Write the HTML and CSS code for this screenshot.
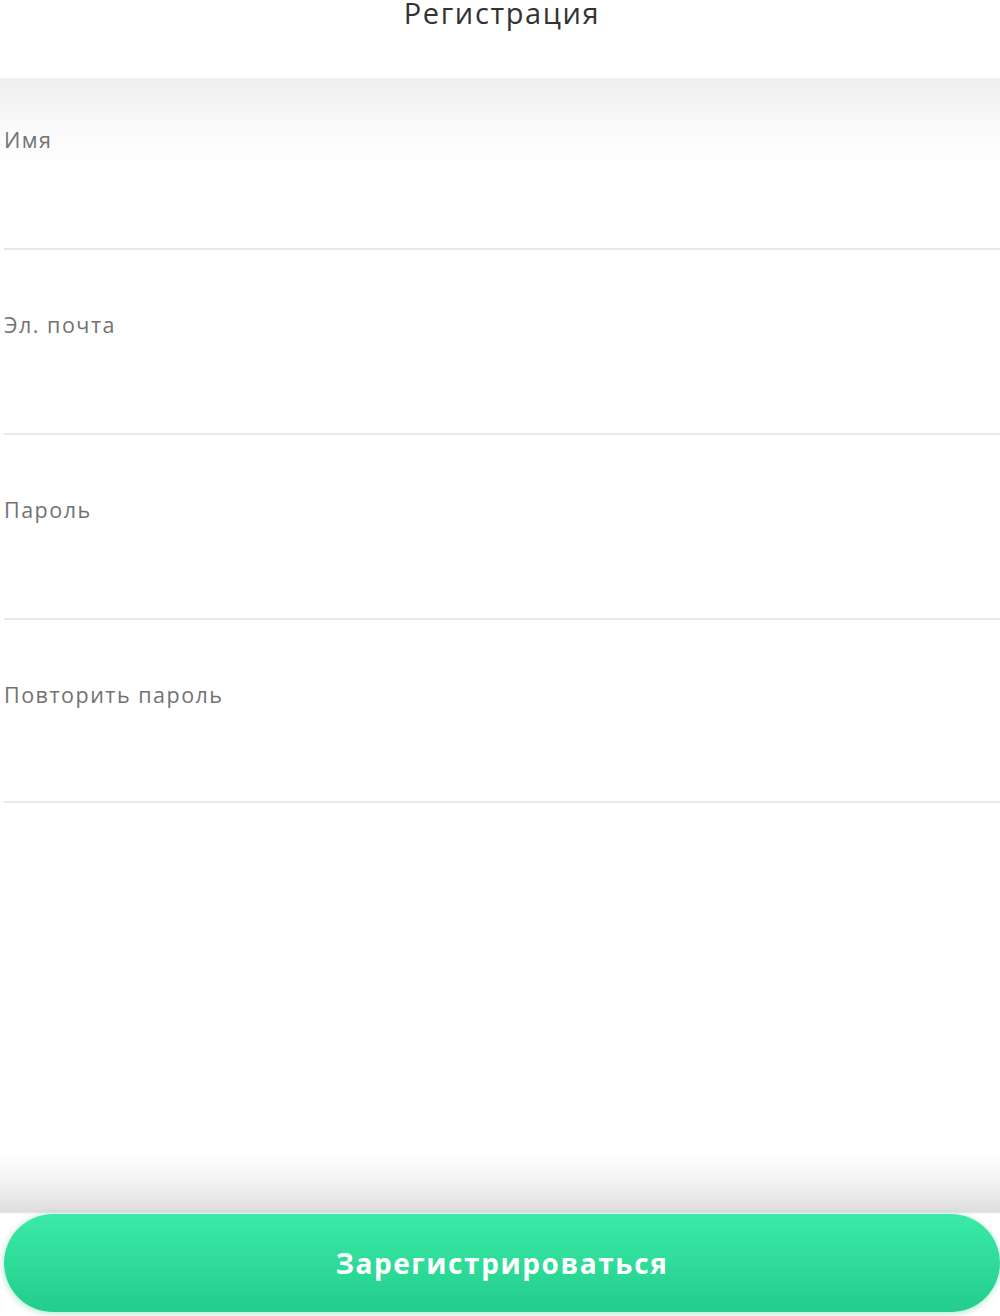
FILE: index.html
```html
<!DOCTYPE html>
<html lang="ru">
<head>
<meta charset="utf-8">
<title>Регистрация</title>
<link rel="stylesheet" href="styles.css">
</head>
<body>
<div class="page">
  <header class="header"><h1 class="title">Регистрация</h1></header>
  <main class="content">
    <form class="form">
      <label class="field"><span class="label">Имя</span><input class="input" type="text"></label>
      <label class="field"><span class="label">Эл. почта</span><input class="input" type="email"></label>
      <label class="field"><span class="label">Пароль</span><input class="input" type="password"></label>
      <label class="field"><span class="label">Повторить пароль</span><input class="input" type="password"></label>
    </form>
  </main>
  <footer class="footer">
    <button class="submit" type="button">Зарегистрироваться</button>
  </footer>
</div>
</body>
</html>
```

FILE: styles.css
```css
html, body {
  margin: 0;
  padding: 0;
  background: #fff;
}
body {
  font-family: "Open Sans", "Liberation Sans", sans-serif;
  padding-left: 4px;
  height: 1316px;
  overflow: hidden;
}
.page {
  display: flex;
  flex-direction: column;
  height: 1316px;
}
.header {
  height: 78px;
  display: flex;
  justify-content: center;
  padding-top: 1px;
  box-sizing: border-box;
}
.title {
  margin: 0;
  font-weight: 400;
  font-size: 29px;
  line-height: 24px;
  color: #333;
  letter-spacing: 1.6px;
}
.content {
  flex: 1;
  margin-left: -4px;
  padding-left: 4px;
  background: linear-gradient(#efefef 0px, #fafafa 50px, #fff 90px);
}
.form {
  display: flex;
  flex-direction: column;
}
.field {
  display: flex;
  flex-direction: column;
  height: 185px;
  border-bottom: 2px solid #e8e8e8;
  box-sizing: border-box;
  padding-top: 63px;
}
.field:first-child { height: 172px; padding-top: 50px; }
.field:last-child { height: 183px; }
.label {
  font-size: 21.5px;
  font-weight: 500;
  line-height: 24px;
  color: #727272;
  letter-spacing: 1.5px;
}
.input {
  border: 0;
  outline: 0;
  background: transparent;
  height: 60px;
}
.footer {
  height: 166px;
  margin-left: -4px;
  padding-left: 4px;
  background: linear-gradient(rgba(255,255,255,0) 0px, #f4f4f4 30px, #dedede 62px, #fff 64px);
  display: flex;
  align-items: flex-end;
  padding-bottom: 4px;
  box-sizing: border-box;
}
.submit {
  width: 100%;
  height: 98px;
  border: 0;
  border-radius: 49px;
  background: linear-gradient(#3aeaa6, #23cd8b);
  color: #fff;
  font-family: "Open Sans", "Liberation Sans", sans-serif;
  font-weight: 700;
  font-size: 28px;
  letter-spacing: 1.6px;
  box-shadow: 0 2px 6px rgba(60, 230, 160, 0.35), -2px 0 8px rgba(0, 0, 0, 0.06);
  cursor: pointer;
}
```
